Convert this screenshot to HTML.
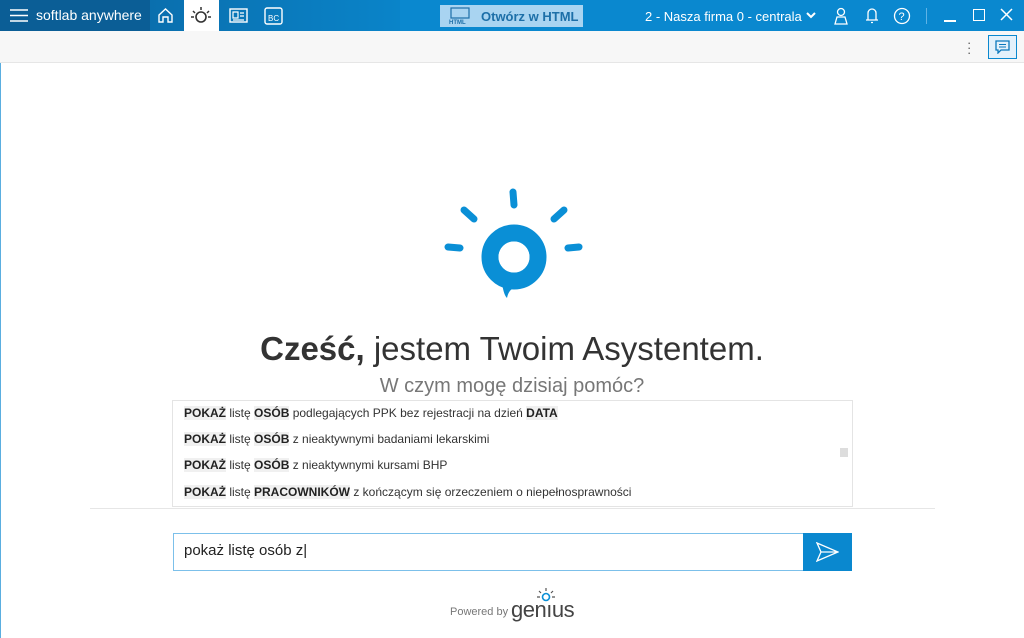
<!DOCTYPE html>
<html><head><meta charset="utf-8"><style>
body{margin:0;width:1024px;height:638px;overflow:hidden;font-family:"Liberation Sans",Arial,sans-serif;background:#fff;position:relative}
.top{position:absolute;left:0;top:0;width:1024px;height:31px;background:#0a88cf}
.dark{position:absolute;left:0;top:0;width:150px;height:31px;background:#0b5e96}
.mid{position:absolute;left:150px;top:0;width:250px;height:31px;background:linear-gradient(90deg,#0a6fae,#0a84c9)}
.t{position:absolute;color:#fff;font-size:14px;top:7px}
.tb{position:absolute;left:0;top:31px;width:1024px;height:31px;background:#f7f7f7;border-bottom:1px solid #e6e6e6}
.frame{position:absolute;left:0;top:31px;width:1px;height:607px;background:#5aaee0}
.item{position:absolute;left:184px;font-size:12px;color:#333;white-space:nowrap}
.item b{color:#222;background:#f0f0f0}
svg{position:absolute}
</style></head><body>
<div class="top"></div><div class="dark"></div><div class="mid"></div>
<div class="frame"></div>
<svg style="left:10px;top:9px" width="18" height="13"><path d="M0 1H18M0 6.5H18M0 12H18" stroke="#fff" stroke-width="1.6"/></svg>
<div class="t" style="left:36px;top:7px;font-size:14px">softlab anywhere</div>
<svg style="left:157px;top:7px" width="17" height="17"><path d="M2 8L8.5 2L15 8V15H11V10H6V15H2Z" fill="none" stroke="#fff" stroke-width="1.4"/></svg>
<div style="position:absolute;left:184px;top:0;width:35px;height:31px;background:#fff"></div>
<svg style="left:190px;top:5px" width="22" height="22"><circle cx="11" cy="12" r="5" fill="none" stroke="#333" stroke-width="1.6"/><path d="M11 2V5M3 6L5 8M19 6L17 8M1 12H4M18 12H21" stroke="#333" stroke-width="1.5"/></svg>
<svg style="left:229px;top:8px" width="19" height="15"><rect x="1" y="1" width="17" height="13" fill="none" stroke="#fff" stroke-width="1.4"/><path d="M4 4H9V10H4ZM11 5H15M11 8H15M4 12H15" stroke="#fff" stroke-width="1.2" fill="none"/></svg>
<svg style="left:264px;top:7px" width="19" height="18"><rect x="1" y="1" width="17" height="16" rx="2" fill="none" stroke="#fff" stroke-width="1.4"/><text x="4" y="14" font-size="8" fill="#fff" font-family="Liberation Sans">BC</text></svg>
<div style="position:absolute;left:440px;top:5px;width:143px;height:22px;background:#a9d4f1"></div>
<svg style="left:449px;top:7px" width="22" height="18"><rect x="2" y="1" width="18" height="10" fill="none" stroke="#1d6fa8" stroke-width="1.2"/><text x="0" y="17" font-size="6" font-weight="bold" fill="#1d6fa8">HTML</text></svg>
<div class="t" style="left:481px;top:9px;font-size:13px;color:#1d6fa8;font-weight:bold">Otwórz w HTML</div>
<div class="t" style="left:645px;top:9px;font-size:13px">2 - Nasza firma 0 - centrala</div>
<svg style="left:806px;top:12px" width="10" height="8"><path d="M1 1L5 5L9 1" fill="none" stroke="#fff" stroke-width="2"/></svg>
<svg style="left:834px;top:7px" width="14" height="18"><circle cx="7" cy="5" r="3.5" fill="none" stroke="#fff" stroke-width="1.3"/><path d="M1 17L3 10H11L13 17Z" fill="none" stroke="#fff" stroke-width="1.3"/></svg>
<svg style="left:865px;top:7px" width="14" height="17"><path d="M3 13V6A4 4 0 0 1 11 6V13ZM1 13H13M6 15.5H8" fill="none" stroke="#fff" stroke-width="1.3"/></svg>
<svg style="left:893px;top:7px" width="18" height="18"><circle cx="9" cy="9" r="7.5" fill="none" stroke="#fff" stroke-width="1.3"/><text x="5.5" y="13" font-size="11" fill="#fff">?</text></svg>
<div style="position:absolute;left:926px;top:8px;width:1px;height:16px;background:#5fb3e6"></div>
<div style="position:absolute;left:944px;top:20px;width:12px;height:1.5px;background:#fff"></div>
<div style="position:absolute;left:973px;top:9px;width:10px;height:10px;border:1.5px solid #fff"></div>
<svg style="left:1000px;top:8px" width="13" height="13"><path d="M1 1L12 12M12 1L1 12" stroke="#fff" stroke-width="1.5"/></svg>
<div class="tb"></div>
<div style="position:absolute;left:967px;top:40px;color:#555;font-size:13px;line-height:5px;width:3px">·<br>·<br>·</div>
<div style="position:absolute;left:988px;top:35px;width:29px;height:24px;border:1px solid #0a88cf;background:#e3f1fb;box-sizing:border-box"></div>
<svg style="left:995px;top:40px" width="15" height="14"><path d="M1 1H14V10H6L3 13V10H1Z" fill="none" stroke="#0a78bd" stroke-width="1.3"/><path d="M4 4.5H11M4 7H11" stroke="#0a78bd"/></svg>
<svg style="left:440px;top:185px" width="150" height="115">
<g stroke="#0a8fd6" stroke-width="7" stroke-linecap="round" fill="none">
<path d="M73 7L74 20M24 25L34 34M124 25L114 34M8 62L20 63M139 62L128 63"/>
</g>
<circle cx="74" cy="72" r="24" fill="none" stroke="#0a8fd6" stroke-width="17"/>
<path d="M62 98C66 100 70 101 76 102C70 104 68 108 67 113C64 110 63 104 62 98Z" fill="#0a8fd6"/>
<circle cx="74" cy="72" r="15.5" fill="#fff"/>
</svg>
<div style="position:absolute;left:0;width:1024px;top:330px;text-align:center;font-size:33px;color:#333"><b>Cześć,</b> jestem Twoim Asystentem.</div>
<div style="position:absolute;left:0;width:1024px;top:375px;text-align:center;font-size:20px;color:#777">W czym mogę dzisiaj pomóc?</div>
<div style="position:absolute;left:172px;top:400px;width:681px;height:107px;border:1px solid #e4e4e4;box-sizing:border-box"></div>
<div style="position:absolute;left:840px;top:448px;width:8px;height:9px;background:#ddd"></div>
<div class="item" style="top:406px"><b>POKAŻ</b> listę <b>OSÓB</b> podlegających PPK bez rejestracji na dzień <b>DATA</b></div>
<div class="item" style="top:432px"><b>POKAŻ</b> listę <b>OSÓB</b> z nieaktywnymi badaniami lekarskimi</div>
<div class="item" style="top:458px"><b>POKAŻ</b> listę <b>OSÓB</b> z nieaktywnymi kursami BHP</div>
<div class="item" style="top:485px"><b>POKAŻ</b> listę <b>PRACOWNIKÓW</b> z kończącym się orzeczeniem o niepełnosprawności</div>
<div style="position:absolute;left:90px;top:508px;width:845px;height:1px;background:#e6e6e6"></div>
<div style="position:absolute;left:173px;top:533px;width:631px;height:38px;border:1px solid #7cc0ea;box-sizing:border-box"></div>
<div style="position:absolute;left:184px;top:542px;font-size:15px;color:#222">pokaż listę osób z|</div>
<div style="position:absolute;left:803px;top:533px;width:49px;height:38px;background:#0a88cf"></div>
<svg style="left:816px;top:542px" width="23" height="20"><path d="M1 1L22 10L1 19L5 10Z M5 10H22" fill="none" stroke="#fff" stroke-width="1.3"/></svg>
<div style="position:absolute;left:450px;top:606px;font-size:11px;color:#777">Powered by</div>
<div style="position:absolute;left:511px;top:597px;font-size:22px;color:#444;letter-spacing:-0.5px">gen<span style="color:#444">ı</span>us</div>
<svg style="left:535px;top:587px" width="22" height="16"><circle cx="11" cy="10" r="3.5" fill="none" stroke="#0a8fd6" stroke-width="1.6"/><path d="M11 1V4M4 4L6 6M18 4L16 6M2 10H5M17 10H20" stroke="#555" stroke-width="1.2"/></svg>
</body></html>
